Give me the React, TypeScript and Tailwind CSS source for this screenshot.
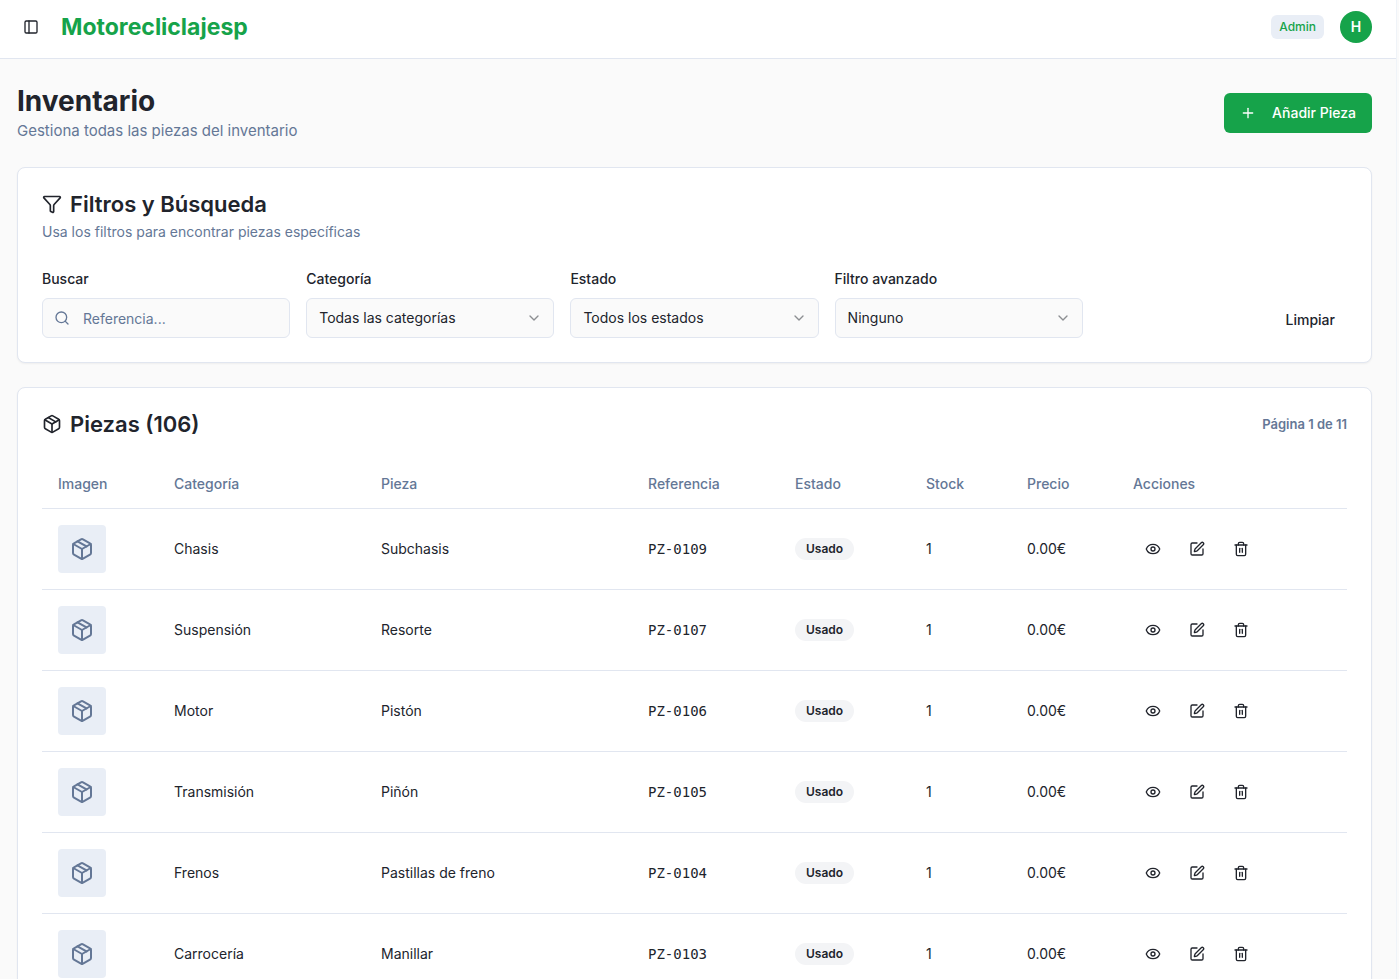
import React, { useState } from "react";
import {
  ChevronDown,
  Eye,
  Funnel,
  Package,
  PanelLeft,
  Plus,
  Search,
  SquarePen,
  Trash2,
} from "lucide-react";

interface Pieza {
  referencia: string;
  categoria: string;
  pieza: string;
  estado: string;
  stock: number;
  precio: number;
}

const piezas: Pieza[] = [
  { referencia: "PZ-0109", categoria: "Chasis", pieza: "Subchasis", estado: "Usado", stock: 1, precio: 0 },
  { referencia: "PZ-0107", categoria: "Suspensión", pieza: "Resorte", estado: "Usado", stock: 1, precio: 0 },
  { referencia: "PZ-0106", categoria: "Motor", pieza: "Pistón", estado: "Usado", stock: 1, precio: 0 },
  { referencia: "PZ-0105", categoria: "Transmisión", pieza: "Piñón", estado: "Usado", stock: 1, precio: 0 },
  { referencia: "PZ-0104", categoria: "Frenos", pieza: "Pastillas de freno", estado: "Usado", stock: 1, precio: 0 },
  { referencia: "PZ-0103", categoria: "Carrocería", pieza: "Manillar", estado: "Usado", stock: 1, precio: 0 },
];

const columns = [
  { label: "Imagen", width: "w-[116px]" },
  { label: "Categoría", width: "w-[207px]" },
  { label: "Pieza", width: "w-[267px]" },
  { label: "Referencia", width: "w-[147px]" },
  { label: "Estado", width: "w-[131px]" },
  { label: "Stock", width: "w-[101px]" },
  { label: "Precio", width: "w-[106px]" },
  { label: "Acciones", width: "w-[230px]" },
];

interface FilterSelectProps {
  id: string;
  label: string;
  value: string;
  options: string[];
  onChange: (value: string) => void;
}

function FilterSelect({ id, label, value, options, onChange }: FilterSelectProps) {
  return (
    <div className="space-y-1.5">
      <label htmlFor={id} className="block text-sm/[26px] font-medium">
        {label}
      </label>
      <div className="relative">
        <select
          id={id}
          value={value}
          onChange={(e) => onChange(e.target.value)}
          className="h-10 w-full appearance-none rounded-md border border-[#e1e6f0] bg-[#fafafa] px-3 text-sm"
        >
          {options.map((option) => (
            <option key={option}>{option}</option>
          ))}
        </select>
        <ChevronDown className="pointer-events-none absolute top-3 right-3 h-4 w-4 opacity-50" />
      </div>
    </div>
  );
}

function Header() {
  return (
    <header className="flex items-center justify-between border-b border-[#e1e6f0] bg-white pt-[11px] pr-6 pb-[15px] pl-[17px]">
      <div className="flex items-center gap-4">
        <button
          type="button"
          aria-label="Alternar menú"
          className="flex h-7 w-7 items-center justify-center rounded-md"
        >
          <PanelLeft className="h-4 w-4" />
        </button>
        <a href="#" className="text-[23px]/8 font-bold text-[#16a34a]">
          Motorecliclajesp
        </a>
      </div>
      <div className="flex items-center gap-4">
        <span className="rounded-md bg-[#e9eef6] px-2 py-1 text-xs/4 font-medium text-[#16a34a]">
          Admin
        </span>
        <button
          type="button"
          className="flex h-8 w-8 items-center justify-center rounded-full bg-[#16a34a] text-sm font-semibold text-white"
        >
          H
        </button>
      </div>
    </header>
  );
}

function PiezaRow({ item }: { item: Pieza }) {
  return (
    <tr className="border-b border-[#e1e6f0]">
      <td className="p-4">
        <div className="flex h-12 w-12 items-center justify-center rounded bg-[#e9eef6]">
          <Package className="h-6 w-6 text-[#647796]" />
        </div>
      </td>
      <td className="p-4">{item.categoria}</td>
      <td className="p-4">{item.pieza}</td>
      <td className="p-4 font-['DejaVu_Sans_Mono',monospace]">{item.referencia}</td>
      <td className="p-4">
        <span className="inline-flex rounded-full border border-transparent bg-[#f3f4f6] px-2.5 py-0.5 text-xs font-semibold">
          {item.estado}
        </span>
      </td>
      <td className="p-4">{item.stock}</td>
      <td className="p-4">{item.precio.toFixed(2)}€</td>
      <td className="px-4">
        <div className="flex gap-1">
          <button type="button" aria-label="Ver" className="rounded-md px-3 py-2.5">
            <Eye className="h-4 w-4" />
          </button>
          <button type="button" aria-label="Editar" className="rounded-md px-3 py-2.5">
            <SquarePen className="h-4 w-4" />
          </button>
          <button type="button" aria-label="Eliminar" className="rounded-md px-3 py-2.5">
            <Trash2 className="h-4 w-4" />
          </button>
        </div>
      </td>
    </tr>
  );
}

export default function App() {
  const [search, setSearch] = useState("");
  const [categoria, setCategoria] = useState("Todas las categorías");
  const [estado, setEstado] = useState("Todos los estados");
  const [avanzado, setAvanzado] = useState("Ninguno");

  const clearFilters = () => {
    setSearch("");
    setCategoria("Todas las categorías");
    setEstado("Todos los estados");
    setAvanzado("Ninguno");
  };

  return (
    <div className="min-h-screen bg-[#fafafa] pr-0.5 font-[Inter,sans-serif] text-[#21242c]">
      <div className="min-h-screen border-r border-[#eff3f8]">
        <Header />

        <main className="space-y-6 py-6 pr-6 pl-[17px]">
          <div className="flex items-center justify-between">
            <div>
              <h1 className="text-[28px]/9 font-bold">Inventario</h1>
              <p className="text-[15px]/6 text-[#647796]">Gestiona todas las piezas del inventario</p>
            </div>
            <button
              type="button"
              className="flex h-10 items-center gap-4 rounded-md bg-[#16a34a] px-4 text-sm font-medium text-white"
            >
              <Plus className="h-4 w-4" />
              Añadir Pieza
            </button>
          </div>

          {/* Filters */}
          <section className="rounded-lg border border-[#e1e6f0] bg-white p-6 shadow-xs">
            <h2 className="flex items-center gap-2 text-[22px]/6 font-semibold">
              <Funnel className="h-5 w-5" />
              Filtros y Búsqueda
            </h2>
            <p className="mt-1.5 text-sm text-[#647796]">
              Usa los filtros para encontrar piezas específicas
            </p>
            <div className="mt-6 grid grid-cols-5 gap-4">
              <div className="space-y-1.5">
                <label htmlFor="buscar" className="block text-sm/[26px] font-medium">
                  Buscar
                </label>
                <div className="relative">
                  <Search className="absolute top-3 left-3 h-4 w-4 text-[#647796]" />
                  <input
                    id="buscar"
                    value={search}
                    onChange={(e) => setSearch(e.target.value)}
                    placeholder="Referencia..."
                    className="h-10 w-full rounded-md border border-[#e1e6f0] bg-[#fafafa] pr-3 pl-10 text-sm placeholder:text-[#647796]"
                  />
                </div>
              </div>
              <FilterSelect
                id="categoria"
                label="Categoría"
                value={categoria}
                options={["Todas las categorías", "Chasis", "Suspensión", "Motor", "Transmisión", "Frenos", "Carrocería"]}
                onChange={setCategoria}
              />
              <FilterSelect
                id="estado"
                label="Estado"
                value={estado}
                options={["Todos los estados", "Nuevo", "Usado"]}
                onChange={setEstado}
              />
              <FilterSelect
                id="avanzado"
                label="Filtro avanzado"
                value={avanzado}
                options={["Ninguno", "Sin stock", "Sin imagen"]}
                onChange={setAvanzado}
              />
              <div className="flex items-end justify-end">
                <button
                  type="button"
                  onClick={clearFilters}
                  className="h-9 rounded-md px-3 text-sm font-medium"
                >
                  Limpiar
                </button>
              </div>
            </div>
          </section>

          {/* Parts list */}
          <section className="rounded-lg border border-[#e1e6f0] bg-white p-6 shadow-xs">
            <div className="flex h-6 items-center justify-between">
              <h2 className="flex items-center gap-2 text-[22px]/6 font-semibold">
                <Package className="h-5 w-5" />
                Piezas (106)
              </h2>
              <span className="text-[13px]/5 font-semibold text-[#647796]">Página 1 de 11</span>
            </div>
            <table className="mt-6 w-full table-fixed text-left text-sm">
              <thead>
                <tr className="border-b border-[#e1e6f0]">
                  {columns.map((column) => (
                    <th
                      key={column.label}
                      scope="col"
                      className={`h-12 px-4 font-medium text-[#647796] ${column.width}`}
                    >
                      {column.label}
                    </th>
                  ))}
                </tr>
              </thead>
              <tbody>
                {piezas.map((item) => (
                  <PiezaRow key={item.referencia} item={item} />
                ))}
              </tbody>
            </table>
          </section>
        </main>
      </div>
    </div>
  );
}
